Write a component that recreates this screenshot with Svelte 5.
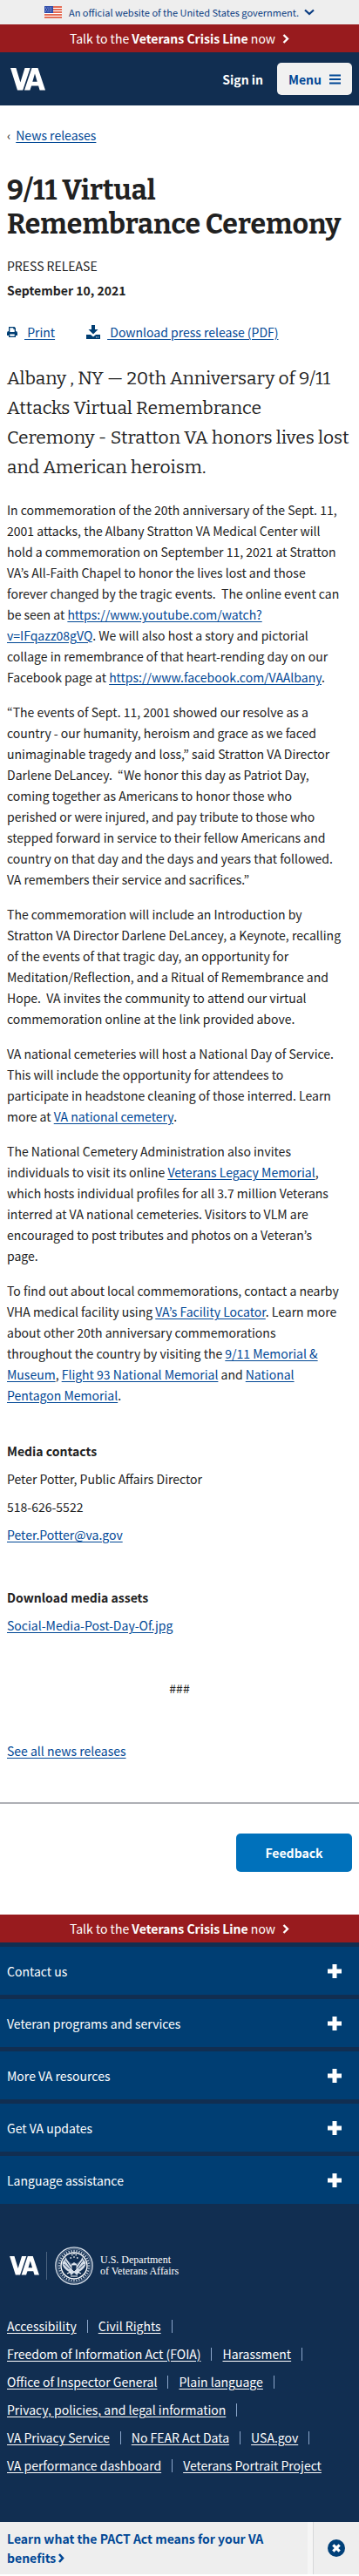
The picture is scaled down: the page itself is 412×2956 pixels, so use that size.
<script>
  const sections = ['Contact us', 'Veteran programs and services', 'More VA resources', 'Get VA updates', 'Language assistance'];
  const footerRows = [
    ['Accessibility', 'Civil Rights'],
    ['Freedom of Information Act (FOIA)', 'Harassment'],
    ['Office of Inspector General', 'Plain language'],
    ['Privacy, policies, and legal information'],
    ['VA Privacy Service', 'No FEAR Act Data', 'USA.gov'],
    ['VA performance dashboard', 'Veterans Portrait Project']
  ];
  const rim = Array.from({ length: 36 }, (_, i) => i * 10);
</script>

{#snippet crisis()}
  <a class="crisis" href="#crisis">
    <span>Talk to the <strong>Veterans Crisis Line</strong> now</span>
    <svg width="8" height="11" viewBox="0 0 8 11" aria-hidden="true"><path d="M1.5 1l4.500 4.500L1.500 10" fill="none" stroke="#fff" stroke-width="2.4" /></svg>
  </a>
{/snippet}

{#snippet vaMark(w, h)}
  <svg width={w} height={h} viewBox="0 0 40 26" role="img" aria-label="VA">
    <path d="M0 0h6.400l5 16.500L16.500 0h6.200L14.200 25.500H8z" fill="#fff" />
    <path d="M24.500 0h7L40 25.500h-6.400l-1.500-5h-8l-1.700 5H16zM28 6.500l-2.700 9.300h5.400z" fill="#fff" fill-rule="evenodd" />
  </svg>
{/snippet}

<div class="page">
  <button class="gov" type="button">
    <svg class="flag" width="20" height="14" viewBox="0 0 20 14" aria-hidden="true">
      <path fill="#fff" d="M0 0h20v14H0z" />
      <path d="M0 1h20M0 4h20M0 7h20M0 10h20M0 13h20" stroke="#db3e1f" stroke-width="1.600" />
      <path fill="#2d4aa8" d="M0 0h10v8H0z" />
      <path d="M1 2h8M2 4h7M1 6h8" stroke="#b9c5ee" stroke-width="1" stroke-dasharray="1 1.500" />
    </svg>
    <span>An official website of the United States government.</span>
    <svg width="12" height="8" viewBox="0 0 12 8" aria-hidden="true"><path d="M1 1.500l5 4.500 5-4.500" fill="none" stroke="#0b3d82" stroke-width="2.200" /></svg>
  </button>
  {@render crisis()}
  <header>
    <a class="home" href="#home">{@render vaMark(40, 26)}</a>
    <button class="signin" type="button">Sign in</button>
    <button class="menu" type="button">
      Menu
      <svg width="13" height="12" viewBox="0 0 13 12" aria-hidden="true"><path d="M0 1.500h13M0 6h13M0 10.500h13" stroke="#004795" stroke-width="2" /></svg>
    </button>
  </header>

  <main>
    <nav class="crumb" aria-label="Breadcrumb"><span>‹</span><a href="#news">News releases</a></nav>
    <h1>9/11 Virtual Remembrance Ceremony</h1>
    <p class="kind">PRESS RELEASE</p>
    <p class="date">September 10, 2021</p>
    <div class="actions">
      <a href="#print">
        <svg width="12" height="12" viewBox="0 0 12 12" aria-hidden="true"><path fill="#003e73" fill-rule="evenodd" d="M2 0h6.500L10 1.500V5a2 2 0 0 1 2 2v3h-2v2H2v-2H0V7a2 2 0 0 1 2-2zM3.300 1.300V6h5.400V2.800H7.300V1.300zM3.300 8.500v2.200h5.400V8.500z" /></svg>
        <span>&nbsp;Print</span>
      </a>
      <a href="#pdf">
        <svg width="16" height="16" viewBox="0 0 16 16" aria-hidden="true"><path fill="#003e73" fill-rule="evenodd" d="M6 0h4v5h3.500L8 10.500 2.500 5H6zM0 11h5l3 2.500L11 11h5v5H0zM11 13.500v1h1v-1zM13 13.500v1h1v-1z" /></svg>
        <span>&nbsp;Download press release (PDF)</span>
      </a>
    </div>

    <p class="intro">Albany , NY — 20th Anniversary of 9/11 Attacks Virtual Remembrance Ceremony&nbsp;- Stratton VA honors lives lost and American heroism.</p>

    <article>
      <p>In commemoration of the 20th anniversary of the Sept. 11, 2001 attacks, the Albany Stratton VA Medical Center will hold a commemoration on September 11, 2021 at Stratton VA’s All-Faith Chapel to honor the lives lost and those forever changed by the tragic events.&nbsp; The online event can be seen at <a href="#youtube">https://www.youtube.com/watch?<wbr />v=IFqazz08gVQ</a>. We will also host a story and pictorial collage in remembrance of that heart-rending day on our Facebook page at <a href="#facebook">https://www.facebook.com/VAAlbany</a>.</p>
      <p>“The events of Sept. 11, 2001 showed our resolve as a country - our humanity, heroism and grace as we faced unimaginable tragedy and loss,” said Stratton VA Director Darlene DeLancey.&nbsp; “We honor this day as Patriot Day, coming together as Americans to honor those who perished or were injured, and pay tribute to those who stepped forward in service to their fellow Americans and country on that day and the days and years that followed. VA remembers their service and sacrifices.”</p>
      <p>The commemoration will include an Introduction by Stratton VA Director Darlene DeLancey, a Keynote, recalling of the events of that tragic day, an opportunity for Meditation/Reflection, and a Ritual of Remembrance and Hope.&nbsp; VA invites the community to attend our virtual commemoration online at the link provided above.</p>
      <p>VA national cemeteries will host a National Day of Service. This will include the opportunity for attendees to participate in headstone cleaning of those interred. Learn more at <a href="#cemetery">VA national cemetery</a>.</p>
      <p>The National Cemetery Administration also invites individuals to visit its online <a href="#vlm">Veterans Legacy Memorial</a>, which hosts individual profiles for all 3.7 million Veterans interred at VA national cemeteries. Visitors to VLM are encouraged to post tributes and photos on a Veteran’s page.</p>
      <p>To find out about local commemorations, contact a nearby VHA medical facility using <a href="#locator">VA’s Facility Locator</a>. Learn more about other 20th anniversary commemorations throughout the country by visiting the <a href="#museum">9/11 Memorial &amp; Museum</a>, <a href="#flight93">Flight 93 National Memorial</a> and <a href="#pentagon">National Pentagon Memorial</a>.</p>
    </article>

    <section>
      <h2>Media contacts</h2>
      <p>Peter Potter, Public Affairs Director</p>
      <p>518-626-5522</p>
      <p><a href="#mail">Peter.Potter@va.gov</a></p>
    </section>
    <section>
      <h2>Download media assets</h2>
      <p><a href="#asset">Social-Media-Post-Day-Of.jpg</a></p>
    </section>
    <p class="end">###</p>
    <p class="all"><a href="#all">See all news releases</a></p>
  </main>

  <div class="feedback"><button type="button">Feedback</button></div>

  <footer>
    {@render crisis()}
    <ul class="accordion">
      {#each sections as s}
        <li>
          <button type="button">
            <span>{s}</span>
            <svg width="16" height="16" viewBox="0 0 16 16" aria-hidden="true"><path d="M8 0v16M0 8h16" stroke="#fff" stroke-width="5" /></svg>
          </button>
        </li>
      {/each}
    </ul>
    <div class="brand">
      {@render vaMark(34, 22)}
      <span class="rule"></span>
      <svg width="44" height="44" viewBox="0 0 44 44" aria-hidden="true">
        <circle cx="22" cy="22" r="21.200" fill="none" stroke="#dfe6ef" stroke-width="1.200" />
        <circle cx="22" cy="22" r="19.300" fill="none" stroke="#9fb0c6" stroke-width=".6" />
        {#each rim as a}
          <path d="M21.400 3.800h1.300v2.200h-1.300z" fill="#c6d1df" transform="rotate({a} 22 22)" />
        {/each}
        <circle cx="22" cy="22" r="15" fill="none" stroke="#fff" stroke-width="1.400" />
        <path d="M8.500 18c2-2 3.500-4 4-6 1.500 4 4.500 6 6.500 8l3-2 3 2c2-2 5-4 6.500-8 .5 2 2 4 4 6 .5 5-4 9-8 11l-2 4-3.500-3-3.500 3-2-4c-4-2-8.500-6-8-11z" fill="#d5dee9" />
        <path d="M12 16l6.500 9M10.500 20l6 6M14 14l5 7.500M32 16l-6.500 9M33.500 20l-6 6M30 14l-5 7.500" stroke="#112e51" stroke-width=".9" />
        <path d="M19 21h6v5l-3 3-3-3z" fill="#112e51" stroke="#fff" stroke-width=".7" />
        <path d="M19 9.500h1.500M23.500 9.500H25M21.300 12h1.400M17.500 13H19M25 13h1.500M21.300 8h1.400" stroke="#fff" stroke-width="1.400" />
        <path d="M14 31l4-2M30 31l-4-2M18 34h8" stroke="#fff" stroke-width="1.200" />
      </svg>
      <span class="dept">U.S. Department<br />of Veterans Affairs</span>
    </div>
    <div class="links">
      {#each footerRows as row, r}
        <ul>
          {#each row as item, i}
            <li class:last={r === footerRows.length - 1 && i === row.length - 1}><a href="#{item}">{item}</a></li>
          {/each}
        </ul>
      {/each}
    </div>
  </footer>

  <aside>
    <a href="#pact">Learn what the PACT Act means for your VA benefits <svg width="7" height="11" viewBox="0 0 7 11" aria-hidden="true"><path d="M1 1l4 4.500L1 10" fill="none" stroke="#004795" stroke-width="2.600" /></svg></a>
    <button type="button" aria-label="Dismiss">
      <svg width="20" height="20" viewBox="0 0 20 20" aria-hidden="true"><circle cx="10" cy="10" r="10" fill="#004079" /><path d="M6.300 6.300l7.400 7.400M13.700 6.300l-7.400 7.400" stroke="#fff" stroke-width="3.200" /></svg>
    </button>
  </aside>
</div>

<style>
  :global(body) { margin: 0; background: #fff; }
  .page {
    font-family: "Noto Sans CJK JP", "Noto Sans", sans-serif;
    font-size: 14px;
    line-height: 24px;
    color: #212121;
  }
  button { font: inherit; border: 0; margin: 0; padding: 0; cursor: pointer; }
  p, h1, h2, ul { margin: 0; padding: 0; }
  ul { list-style: none; }
  a { color: #004795; text-underline-offset: 2px; }
  svg { flex: none; }

  .gov {
    display: flex; align-items: center; justify-content: center;
    width: 100%; height: 28px;
    background: #eee; color: #0b3d82; font-size: 11px;
  }
  .gov span { margin: 0 6px 0 8px; }
  .crisis {
    display: flex; align-items: center; justify-content: center; gap: 8px;
    height: 32px; background: #981b1e; color: #fff; text-decoration: none;
  }
  header {
    display: flex; align-items: center;
    height: 61px; padding: 0 8px 0 12px;
    background: #112e51; color: #fff; font-weight: 700;
  }
  .home { display: flex; margin-right: auto; }
  .signin { background: none; color: #fff; margin-right: 16px; }
  .menu {
    display: flex; align-items: center; gap: 9px;
    height: 37px; padding: 0 13px; border-radius: 5px;
    background: #f1f1f1; color: #004795;
  }

  main { padding: 22px 8px 47px; border-bottom: 2px solid #aeb0b5; }
  .crumb { display: flex; gap: 6px; }
  h1 {
    margin: 32px 0 16px; padding-right: 8px;
    font-family: Bitter, "DejaVu Serif Condensed", "DejaVu Serif", serif;
    font-size: 32px; line-height: 39px;
  }
  .date { margin-top: 4px; font-weight: 700; }
  .actions { display: flex; gap: 36px; margin: 24px 0; }
  .actions a { display: flex; align-items: center; gap: 8px; text-decoration: none; }
  .actions span { text-decoration: underline; }
  .intro {
    margin-bottom: 20px;
    font-family: Bitter, "DejaVu Serif Condensed", "DejaVu Serif", serif;
    font-size: 21px; line-height: 34px;
  }
  article { padding-right: 12px; }
  article p { margin-bottom: 16px; }
  section { margin-top: 48px; }
  section p { margin-top: 8px; }
  h2 { font-size: 14px; line-height: 24px; }
  article + section { margin-top: 40px; }
  .end { margin: 48px 0; text-align: center; }

  .feedback { display: flex; justify-content: flex-end; padding: 34px 8px 49px; }
  .feedback button {
    width: 133px; height: 44px; border-radius: 5px;
    background: #0071bb; color: #fff; font-weight: 700;
  }

  footer { background: #112e51; color: #fff; }
  footer a { color: #fff; }
  .accordion button {
    display: flex; align-items: center; justify-content: space-between;
    width: 100%; height: 55px; padding: 0 20px 0 8px; margin-top: 5px;
    background: #003e73; color: #fff;
  }
  .brand { display: flex; align-items: center; padding: 49px 11px 0; }
  .rule { width: 1px; height: 32px; margin: 0 9px 0 8px; background: #4c637f; }
  .dept {
    margin-left: 8px;
    font-family: "Liberation Serif", serif; font-size: 12px; line-height: 13px;
  }
  .links { display: grid; gap: 8px; padding: 35px 8px 53px; }
  .links ul { display: flex; }
  .links li { display: flex; align-items: center; white-space: nowrap; }
  .links li::after { content: ""; width: 1px; height: 15px; margin: 0 12px; background: #8ba6ca; }
  .links .last::after { display: none; }

  aside { display: flex; min-height: 60px; background: #eee; color: #004795; font-weight: 700; line-height: 22px; }
  aside a { flex: 1; padding: 8px 40px 8px 8px; color: #004795; text-decoration: none; border-right: 6px solid #f5f5f5; }
  aside button { width: 53px; display: flex; align-items: center; justify-content: center; background: none; border-left: 1px solid #d6d7d9; }
</style>
